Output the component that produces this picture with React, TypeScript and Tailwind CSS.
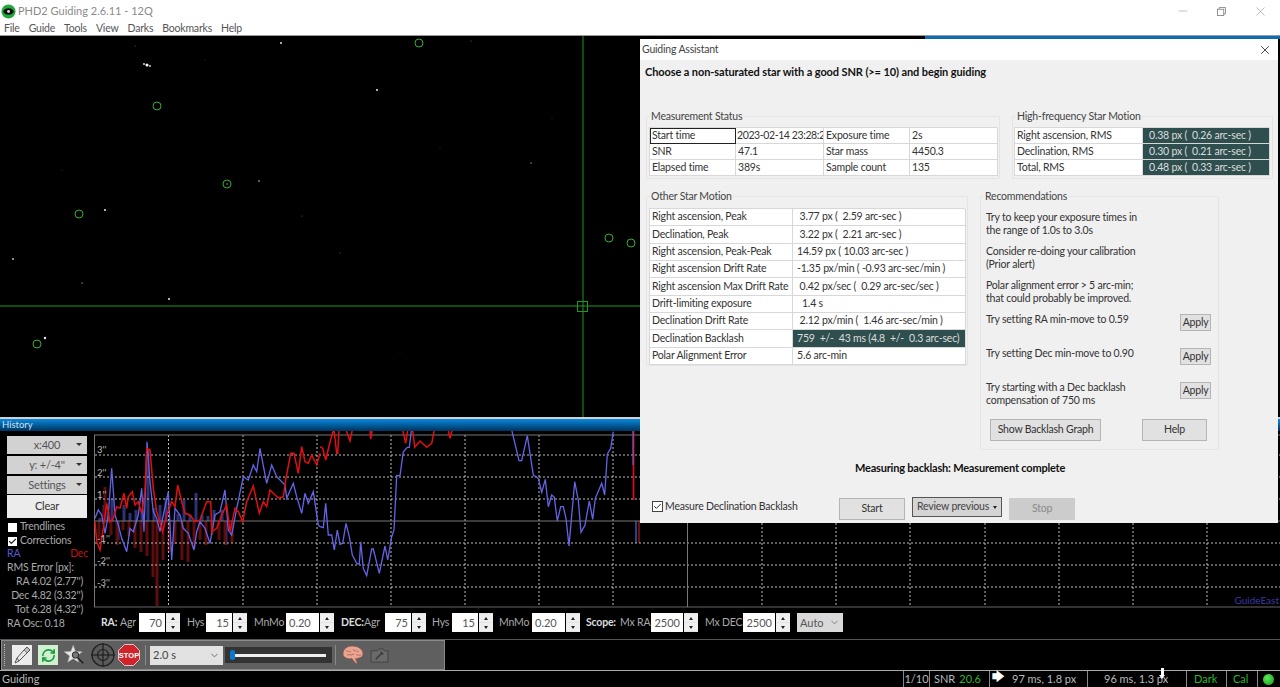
import React from "react";
import { RefreshCw, ChevronDown, X, Minus, Check } from "lucide-react";

type P = [number, number];
const z2 = (p: P[]) => p.map(([x, y]) => `${(x / 3).toFixed(1)},${(415 + y / 3).toFixed(1)}`).join(" ");
const z3 = (p: P[]) => p.map(([x, y]) => `${(320 + x / 3).toFixed(1)},${(415 + y / 3).toFixed(1)}`).join(" ");

const blueA: P[] = [[285,310],[295,285],[305,300],[315,355],[325,300],[335,160],[345,300],[355,330],[365,370],[380,410],[390,340],[400,350],[415,300],[425,220],[432,350],[441,80],[450,200],[460,290],[470,310],[480,350],[490,300],[505,230],[515,435],[525,280],[540,300],[550,340],[565,355],[582,405],[590,350],[600,320],[615,340],[630,385],[645,300],[660,290],[675,225],[685,345],[695,360],[710,280],[730,185],[745,195],[760,150],[770,170],[780,100],[800,205],[815,150],[830,185],[855,210],[860,250],[880,205],[890,245],[905,295],[915,235],[925,265],[940,230],[955,330],[960,335]];
const blueB: P[] = [[0,335],[10,338],[17,265],[25,360],[35,360],[43,405],[52,345],[60,388],[68,385],[78,325],[88,365],[97,420],[110,445],[118,448],[122,380],[130,460],[140,482],[155,402],[160,402],[178,475],[195,393],[203,435],[215,365],[222,345],[230,182],[240,182],[250,110],[262,97],[268,97],[275,40]];
const blueC: P[] = [[575,45],[597,137],[605,137],[622,62],[640,180],[655,190],[665,232],[676,193],[685,275],[695,240],[703,247],[712,318],[722,275],[730,275],[738,310],[747,393],[764,200],[775,255],[783,352],[795,330],[808,258],[818,313],[826,250],[845,205],[854,240],[862,118],[872,100],[880,50]];
const redA: P[] = [[285,320],[290,380],[300,405],[310,340],[320,265],[330,320],[340,310],[350,275],[360,280],[372,235],[380,280],[385,245],[397,230],[405,270],[415,260],[425,295],[435,230],[440,100],[450,105],[460,220],[470,290],[488,350],[500,300],[515,260],[525,275],[533,210],[545,260],[555,295],[570,300],[585,320],[600,315],[620,260],[632,260],[636,350],[650,340],[665,300],[680,270],[690,350],[705,280],[715,290],[728,320],[740,260],[760,213],[778,295],[790,260],[800,275],[810,225],[825,240],[838,250],[850,245],[858,190],[872,115],[882,115],[895,175],[905,95],[915,140],[925,145],[935,120],[950,150],[960,115]];
const redB: P[][] = [
  [[0,95],[8,100],[17,135],[28,90],[38,52],[42,45],[50,115],[53,115],[57,45]],
  [[78,45],[90,78],[97,45]],
  [[150,45],[152,72],[157,45]],
  [[248,45],[257,85],[263,45]],
  [[278,45],[284,97],[300,78],[320,97],[335,85],[343,45]],
  [[385,45],[390,70],[397,45]],
];
const blueBars: P[] = [[100,518],[104,505],[108,512],[112,499],[118,540],[124,505],[130,513],[136,510],[142,510],[148,450],[154,508],[160,505],[166,498],[172,520],[178,514],[184,500],[190,515],[196,493],[202,515],[208,516],[214,510],[222,510],[226,545]];
const redBars: P[] = [[98,540],[103,510],[110,535],[116,545],[122,530],[128,536],[134,548],[140,552],[146,556],[152,577],[156,606],[162,560],[168,552],[174,544],[181,560],[187,562],[193,548],[199,540],[205,545],[211,535],[218,540],[224,545],[231,543],[104,487]];

const ChartSvg = () => (
  <svg viewBox="94 431 1186 177" className="w-full h-[177px] block">
    {blueBars.map(([x, y], i) => <line key={i} x1={x} x2={x} y1={521} y2={y} stroke="#2c3275" strokeWidth="3" />)}
    {redBars.map(([x, y], i) => <line key={i} x1={x + 1} x2={x + 1} y1={521} y2={y} stroke="#5c0d0d" strokeWidth="3" />)}
    <line x1="636" x2="636" y1="521" y2="543" stroke="#333a85" strokeWidth="2" />
    <line x1="639" x2="639" y1="521" y2="543" stroke="#6b0f0f" strokeWidth="2" />
    {[455, 477, 499, 543, 565, 587].map((y) => <line key={y} x1="95" x2="1280" y1={y} y2={y} stroke="#bdbdbd" strokeDasharray="2 2" />)}
    {[168.5, 243, 317, 391, 465, 539, 613, 762, 836, 910, 985, 1059, 1133, 1207].map((x) => <line key={x} x1={x} x2={x} y1="435" y2="607" stroke="#bdbdbd" strokeDasharray="2 2" />)}
    <line x1="94" x2="1280" y1="435" y2="435" stroke="#777" />
    <line x1="94" x2="1280" y1="521" y2="521" stroke="#777" />
    <line x1="94" x2="1280" y1="607" y2="607" stroke="#666" />
    <line x1="94.5" x2="94.5" y1="435" y2="607" stroke="#777" />
    <line x1="687.5" x2="687.5" y1="435" y2="607" stroke="#777" />
    <polyline points={z2(blueA)} fill="none" stroke="#6464e6" strokeWidth="1.3" />
    <polyline points={z3(blueB)} fill="none" stroke="#6464e6" strokeWidth="1.3" />
    <polyline points={z3(blueC)} fill="none" stroke="#6464e6" strokeWidth="1.3" />
    <polyline points={z2(redA)} fill="none" stroke="#e01010" strokeWidth="1.5" />
    {redB.map((p, i) => <polyline key={i} points={z3(p)} fill="none" stroke="#e01010" strokeWidth="1.5" />)}
    <line x1="633.5" x2="633.5" y1="431" y2="500" stroke="#d01020" strokeWidth="1.8" />
    <line x1="633" x2="633" y1="431" y2="465" stroke="#6464e6" strokeWidth="1" />
  </svg>
);

const stars: [number, number, number, string][] = [[147,65,1.6,"#fff"],[144,64,1,"#ddd"],[150,66,1,"#ccc"],[281,43,1,"#ddd"],[377,90,1,"#eee"],[259,181,.8,"#ccc"],[105,210,1.1,"#ddd"],[531,163,.7,"#aaa"],[13,259,.9,"#ccc"],[169,299,1,"#eee"],[45,338,1.2,"#eee"],[82,283,.7,"#999"],[227,184,.7,"#bbb"],[471,41,.5,"#888"],[340,253,.5,"#777"],[135,46,.5,"#777"],[205,60,.4,"#666"],[302,216,.5,"#777"],[440,148,.4,"#666"],[552,118,.4,"#666"],[62,170,.4,"#666"],[400,352,.4,"#666"]];
const rings: P[] = [[419,43],[157,106],[227,184],[79,214],[609,238],[631,243],[37,344]];

const SkyField = () => (
  <svg viewBox="0 36 640 381" className="absolute left-0 top-0 w-[640px] h-[381px]">
    {stars.map(([x, y, r, c], i) => <circle key={i} cx={x} cy={y} r={r} fill={c} />)}
    {rings.map(([x, y], i) => <circle key={i} cx={x} cy={y} r="4" fill="none" stroke="#2fae2f" strokeWidth="1" />)}
    <line x1="0" x2="640" y1="306" y2="306" stroke="#1f9a1f" />
    <line x1="583" x2="583" y1="36" y2="417" stroke="#1f9a1f" />
    <rect x="577.5" y="301.5" width="10" height="10" fill="none" stroke="#1f9a1f" />
  </svg>
);

const SideBtn = ({ label, h = "h-[18px]" }: { label: string; h?: string }) => (
  <div className={`relative ${h} w-[80px] bg-[#d2d2d2] flex items-center justify-center text-[#555] text-[11px]`}>
    {label}
    <span className="absolute right-[5px] top-[7px] w-0 h-0 border-x-[3px] border-x-transparent border-t-[3px] border-t-[#333]" />
  </div>
);

const Spin = ({ w, value, align = "right" }: { w: string; value: string; align?: string }) => (
  <div className="flex items-center">
    <div className={`${w} h-[19px] bg-white text-[#555] text-[11px] leading-[19px] px-[3px] ${align === "right" ? "text-right" : "text-left"}`}>{value}</div>
    <div className="ml-[1px] w-[14px] h-[19px] bg-[#e4e4e4] flex flex-col justify-between py-[1px]">
      <div className="h-[8px] bg-[#efefef] flex items-center justify-center"><span className="w-0 h-0 border-x-[2.5px] border-x-transparent border-b-[3px] border-b-[#222]" /></div>
      <div className="h-[8px] bg-[#efefef] flex items-center justify-center"><span className="w-0 h-0 border-x-[2.5px] border-x-transparent border-t-[3px] border-t-[#222]" /></div>
    </div>
  </div>
);

const Lbl = ({ children, w, bold }: { children: React.ReactNode; w?: string; bold?: boolean }) => (
  <span className={`${w ?? ""} text-[10.5px] tracking-[-0.2px] whitespace-nowrap ${bold ? "font-bold text-[#ddd]" : "text-[#aaa]"}`}>{children}</span>
);

const Controls = () => (
  <div className="h-[30px] flex items-center pl-[7px] pb-[1px]">
    <Lbl bold w="w-[18px]">RA:</Lbl>
    <Lbl w="w-[19px] ml-[1px]">Agr</Lbl>
    <Spin w="w-[26px]" value="70" />
    <Lbl w="w-[19px] ml-[7px]">Hys</Lbl>
    <Spin w="w-[26px]" value="15" />
    <Lbl w="w-[32px] ml-[7px]">MnMo</Lbl>
    <Spin w="w-[33px]" value="0.20" align="left" />
    <Lbl bold w="w-[23px] ml-[7px]">DEC:</Lbl>
    <Lbl w="w-[21px]">Agr</Lbl>
    <Spin w="w-[26px]" value="75" />
    <Lbl w="w-[20px] ml-[6px]">Hys</Lbl>
    <Spin w="w-[26px]" value="15" />
    <Lbl w="w-[33px] ml-[6px]">MnMo</Lbl>
    <Spin w="w-[33px]" value="0.20" align="left" />
    <Lbl bold w="w-[34px] ml-[6px]">Scope:</Lbl>
    <Lbl w="w-[31px]">Mx RA</Lbl>
    <Spin w="w-[32px]" value="2500" />
    <Lbl w="w-[38px] ml-[7px]">Mx DEC</Lbl>
    <Spin w="w-[32px]" value="2500" />
    <div className="ml-[7px] w-[46px] h-[19px] bg-[#d9d9d9] text-[#555] text-[11px] leading-[19px] pl-[3px] flex items-center justify-between">
      Auto <ChevronDown className="w-[11px] h-[11px] mr-[3px] text-[#777]" />
    </div>
  </div>
);

const CheckRow = ({ label, on }: { label: string; on?: boolean }) => (
  <div className="h-[14px] flex items-center gap-[3px] text-[#aaa] text-[10.5px] tracking-[-0.2px]">
    <span className="w-[9px] h-[9px] bg-white ml-[1px] flex items-center justify-center">
      {on && <Check className="w-[9px] h-[9px] text-[#222]" strokeWidth={3} />}
    </span>
    {label}
  </div>
);

const LeftPanel = () => (
  <div className="w-[94px] shrink-0 pl-[7px] pt-[5px] text-[10.5px] tracking-[-0.2px] text-[#aaa]">
    <div className="flex flex-col gap-[2px]">
      <SideBtn label="x:400" />
      <SideBtn label="y: +/-4''" />
      <SideBtn label="Settings" />
    </div>
    <div className="mt-[1px] w-[80px] h-[23px] bg-[#ececec] text-[#333] flex items-center justify-center text-[11px]">Clear</div>
    <div className="mt-[2px]"><CheckRow label="Trendlines" /></div>
    <CheckRow label="Corrections" on />
    <div className="flex justify-between w-[81px] h-[14px] leading-[14px] mt-[-2px]"><span className="text-[#5a5ad0]">RA</span><span className="text-[#c01515]">Dec</span></div>
    <div className="h-[14px] leading-[14px]">RMS Error [px]:</div>
    <div className="w-[76px] text-right h-[14px] leading-[14px] whitespace-nowrap">RA 4.02 (2.77'')</div>
    <div className="w-[76px] text-right h-[14px] leading-[14px] whitespace-nowrap">Dec 4.82 (3.32'')</div>
    <div className="w-[76px] text-right h-[14px] leading-[14px] whitespace-nowrap">Tot 6.28 (4.32'')</div>
    <div className="h-[14px] leading-[14px]">RA Osc: 0.18</div>
  </div>
);

const UsbIcon = () => (
  <svg viewBox="0 0 20 20" className="w-[20px] h-[20px]" fill="none" stroke="#555" strokeWidth="1">
    <path d="M3 18 L5 13 L12 5 L15 8 L7 16 Z" fill="#e8e8e8" />
    <path d="M12 5 L15 2 L18 5 L15 8" fill="#bbb" />
    <path d="M5 13 L7 16" />
  </svg>
);
const StarIcon = () => (
  <svg viewBox="0 0 24 24" className="w-[22px] h-[22px]">
    <path d="M10 1 L12.5 8 L20 8.5 L14 13 L16 20 L10 16 L4 20 L6 13 L0 8.5 L7.5 8 Z" fill="#e6e6e6" stroke="#999" strokeWidth=".5" />
    <circle cx="12.5" cy="12" r="3.5" fill="#777" stroke="#222" strokeWidth="1" />
    <line x1="15" y1="15" x2="21" y2="21" stroke="#222" strokeWidth="1.8" />
  </svg>
);
const ScopeIcon = () => (
  <svg viewBox="0 0 24 24" className="w-[24px] h-[24px]" fill="none" stroke="#1e1e1e">
    <circle cx="12" cy="12" r="11" strokeWidth="1.2" fill="#5a5a5a" />
    <circle cx="12" cy="12" r="5.5" strokeWidth="1.2" />
    <line x1="0" x2="24" y1="12" y2="12" strokeWidth="1.2" />
    <line x1="12" x2="12" y1="0" y2="24" strokeWidth="1.2" />
  </svg>
);
const StopIcon = () => (
  <svg viewBox="0 0 22 22" className="w-[22px] h-[22px]">
    <path d="M6.5 .5 H15.5 L21.5 6.5 V15.5 L15.5 21.5 H6.5 L.5 15.5 V6.5 Z" fill="#d2232a" stroke="#eee" strokeWidth=".8" />
    <text x="11" y="14" textAnchor="middle" fontSize="7.5" fontWeight="700" fill="#fff" fontFamily="Liberation Sans, sans-serif">STOP</text>
  </svg>
);
const BrainIcon = () => (
  <svg viewBox="0 0 22 20" className="w-[22px] h-[20px]">
    <path d="M1 9 C1 4 5 1 10 1 C16 1 21 4 21 9 C21 12 18 13 16 13 C15.500 14 14 14 13.500 13.500 C14 16 16 18 15 18.500 C13 18.500 11 15 10 13.500 C7 14.500 1 13 1 9 Z" fill="#e9a592" stroke="#8a5246" strokeWidth=".7" />
    <path d="M4 6 C6 5 7 8 9 6 M11 4 C12 7 15 5 17 7 M5 10 C7 9 9 11 12 9 M14 9 C15 11 17 10 19 10" stroke="#a45f50" strokeWidth=".8" fill="none" />
  </svg>
);
const ToolIcon = () => (
  <svg viewBox="0 0 20 16" className="w-[19px] h-[15px]" fill="none" stroke="#424242" strokeWidth="1">
    <path d="M1 3 H8 L9 1 H14 L15 3 H19 V15 H1 Z" fill="#6a6a6a" />
    <path d="M6 12 L12 6 M11 4 L14 7" stroke="#3c3c3c" strokeWidth="1.6" />
  </svg>
);

const Toolbar = () => (
  <div className="mx-[1px] w-[444px] h-[30px] bg-[#5f5f5f] border border-[#8a8a8a] flex items-center pl-[2px]">
    <div className="w-[1px] h-[22px] border-l border-dotted border-[#bbb]" />
    <div className="ml-[7px] w-[20px] h-[20px] bg-[#ececec] flex items-center justify-center"><UsbIcon /></div>
    <div className="ml-[6px] w-[20px] h-[20px] bg-[#d0f0d0] flex items-center justify-center"><RefreshCw className="w-[15px] h-[15px] text-[#1a9c3c]" strokeWidth={2.6} /></div>
    <div className="ml-[6px] w-[22px] flex justify-center"><StarIcon /></div>
    <div className="ml-[5px] w-[24px] flex justify-center"><ScopeIcon /></div>
    <div className="ml-[3px] w-[22px] flex justify-center"><StopIcon /></div>
    <div className="ml-[5px] w-[1px] h-[20px] bg-[#8a8a8a]" />
    <div className="ml-[4px] w-[73px] h-[19px] bg-[#e2e2e2] text-[#444] text-[11px] pl-[3px] flex items-center justify-between">
      2.0 s <ChevronDown className="w-[11px] h-[11px] mr-[3px] text-[#666]" />
    </div>
    <div className="ml-[2px] w-[107px] h-[16px] bg-[#333] relative flex items-center pl-[6px]">
      <div className="w-[95px] h-[3px] bg-[#eee]" />
      <div className="absolute left-[5px] top-[3px] w-[5px] h-[10px] rounded-[2px] bg-[#0a78d0]" />
    </div>
    <div className="ml-[3px] w-[1px] h-[20px] bg-[#8a8a8a]" />
    <div className="ml-[6px]"><BrainIcon /></div>
    <div className="ml-[6px]"><ToolIcon /></div>
  </div>
);

const StatusCell = ({ w, children, cls = "" }: { w: string; children: React.ReactNode; cls?: string }) => (
  <div className={`${w} h-full border-l border-[#888] flex items-center ${cls}`}>{children}</div>
);

const StatusBar = () => (
  <div className="h-[17px] border-t border-[#aaa] flex items-center text-[11px] text-[#bbb]">
    <div className="w-[903px] pl-[2px]">Guiding</div>
    <StatusCell w="w-[26px]" cls="justify-center">1/10</StatusCell>
    <StatusCell w="w-[60px]" cls="pl-[4px] justify-between pr-[8px]"><span>SNR</span><span className="text-[#2fb52f]">20.6</span></StatusCell>
    <StatusCell w="w-[98px]" cls="relative pl-[22px]">
      <span className="absolute left-[2px] top-[-1px] text-white text-[12px] font-bold leading-[14px]">🡆</span>97 ms, 1.8 px
    </StatusCell>
    <StatusCell w="w-[99px]" cls="relative pl-[16px]">
      96 ms, 1.3 px
      <span className="absolute left-[73px] top-[-3px] w-[3px] h-[7px] bg-white" />
      <span className="absolute left-[71px] top-[4px] w-0 h-0 border-x-[3.5px] border-x-transparent border-t-[4px] border-t-white" />
    </StatusCell>
    <StatusCell w="w-[40px]" cls="pl-[7px] text-[#2fb52f]">Dark</StatusCell>
    <StatusCell w="w-[31px]" cls="pl-[6px] text-[#2fb52f]">Cal</StatusCell>
    <StatusCell w="w-[23px]" cls="pl-[5px]"><span className="w-[11px] h-[11px] rounded-full bg-[radial-gradient(circle_at_40%_35%,#5fe85f,#119a11)]" /></StatusCell>
  </div>
);

const Group = ({ title, className, children }: { title: string; className: string; children: React.ReactNode }) => (
  <fieldset className={`border border-[#e4e4e4] rounded-[1px] px-[2px] ${className}`}>
    <legend className="ml-[1px] px-[1px] leading-[13px] text-[#444]">{title}</legend>
    {children}
  </fieldset>
);

const c = "px-[2px] border-r border-b border-[#d8d8d8] whitespace-nowrap overflow-hidden flex items-center";

const DialogBtn = ({ children, cls }: { children: React.ReactNode; cls: string }) => (
  <div className={`flex items-center justify-center border border-[#b5b5b5] bg-[#e1e1e1] text-[#333] whitespace-nowrap ${cls}`}>{children}</div>
);

const status = [
  ["Start time", "2023-02-14 23:28:2", "Exposure time", "2s"],
  ["SNR", "47.1", "Star mass", "4450.3"],
  ["Elapsed time", "389s", "Sample count", "135"],
];
const hf = [
  ["Right ascension, RMS", "0.38 px (  0.26 arc-sec )"],
  ["Declination, RMS", "0.30 px (  0.21 arc-sec )"],
  ["Total, RMS", "0.48 px (  0.33 arc-sec )"],
];
const other = [
  ["Right ascension, Peak", " 3.77 px (  2.59 arc-sec )", 0],
  ["Declination, Peak", " 3.22 px (  2.21 arc-sec )", 0],
  ["Right ascension, Peak-Peak", "14.59 px ( 10.03 arc-sec )", 0],
  ["Right ascension Drift Rate", "-1.35 px/min ( -0.93 arc-sec/min )", 0],
  ["Right ascension Max Drift Rate", " 0.42 px/sec (  0.29 arc-sec/sec )", 0],
  ["Drift-limiting exposure", "  1.4 s", 0],
  ["Declination Drift Rate", " 2.12 px/min (  1.46 arc-sec/min )", 0],
  ["Declination Backlash", "759  +/-  43 ms (4.8  +/-  0.3 arc-sec)", 1],
  ["Polar Alignment Error", "5.6 arc-min", 0],
] as const;

const Dialog = () => (
  <div className="absolute left-[640px] top-[39px] w-[638px] h-[484px] bg-[#f0f0f0] flex flex-col text-[10.5px] tracking-[-0.2px] text-[#333]">
    <div className="h-[21px] shrink-0 bg-white flex items-center justify-between pl-[2px] pr-[6px] text-[#444]">
      Guiding Assistant
      <X className="w-[14px] h-[14px] text-[#222]" strokeWidth={1.4} />
    </div>
    <div className="h-[24px] shrink-0 pl-[5px] flex items-center font-bold text-[#111] text-[11px] tracking-[-0.1px]">Choose a non-saturated star with a good SNR (&gt;= 10) and begin guiding</div>
    <div className="mt-[26px] flex items-start">
      <Group title="Measurement Status" className="ml-[6px] w-[354px] h-[69px]">
        <div className="mt-[4px] bg-white border-t border-l border-[#d8d8d8] grid grid-cols-[86px_88px_86px_88px] w-[348px]">
          {status.flat().map((t, i) => (
            <div key={i} className={`${c} h-[16px] ${i === 0 ? "outline outline-[1.5px] outline-[#222] -outline-offset-1" : ""} ${i === 1 ? "tracking-[-0.4px] !px-[1px]" : ""}`}>{t}</div>
          ))}
        </div>
      </Group>
      <Group title="High-frequency Star Motion" className="ml-[12px] w-[261px] h-[69px]">
        <div className="mt-[4px] -ml-[1px] bg-white border-t border-l border-[#d8d8d8] grid grid-cols-[128px_127px] w-[255px]">
          {hf.map(([a, b]) => (
            <React.Fragment key={a}>
              <div className={`${c} h-[16px]`}>{a}</div>
              <div className={`${c} h-[16px] bg-[#2f4f4f] text-[#ddd] whitespace-pre !pl-[6px]`}>{b}</div>
            </React.Fragment>
          ))}
        </div>
      </Group>
    </div>
    <div className="mt-[11px] flex items-start">
      <Group title="Other Star Motion" className="ml-[6px] w-[321px] h-[176px]">
        <div className="mt-[5px] bg-white border-t border-l border-[#d8d8d8] grid grid-cols-[143px_173px] grid-rows-[repeat(9,17.33px)] w-[316px]">
          {other.map(([a, b, dark]) => (
            <React.Fragment key={a}>
              <div className={c}>{a}</div>
              <div className={`${c} whitespace-pre !pl-[4px] ${dark ? "bg-[#2f4f4f] text-[#ddd]" : ""}`}>{b}</div>
            </React.Fragment>
          ))}
        </div>
      </Group>
      <Group title="Recommendations" className="ml-[12px] w-[239px] h-[260px]">
        <div className="flex flex-col leading-[13.4px] px-[3px] pt-[1px]">
          <div className="h-[34px] pt-[7px]">Try to keep your exposure times in<br />the range of 1.0s to 3.0s</div>
          <div className="h-[34px] pt-[7px]">Consider re-doing your calibration<br />(Prior alert)</div>
          <div className="h-[34px] pt-[7px]">Polar alignment error &gt; 5 arc-min;<br />that could probably be improved.</div>
          <div className="h-[34px] pt-[7px] flex justify-between"><span>Try setting RA min-move to 0.59</span><DialogBtn cls="w-[31px] h-[17px] mt-[1px] mr-[2px]">Apply</DialogBtn></div>
          <div className="h-[34px] pt-[7px] flex justify-between"><span>Try setting Dec min-move to 0.90</span><DialogBtn cls="w-[31px] h-[17px] mt-[1px] mr-[2px]">Apply</DialogBtn></div>
          <div className="h-[34px] pt-[7px] flex justify-between"><span>Try starting with a Dec backlash<br />compensation of 750 ms</span><DialogBtn cls="w-[31px] h-[17px] mt-[1px] mr-[2px]">Apply</DialogBtn></div>
        </div>
        <div className="mt-[11px] ml-[7px] flex justify-between pr-[9px]">
          <DialogBtn cls="w-[111px] h-[22px]">Show Backlash Graph</DialogBtn>
          <DialogBtn cls="w-[65px] h-[22px]">Help</DialogBtn>
        </div>
      </Group>
    </div>
    <div className="mt-[10px] h-[16px] pl-[215px] flex items-center font-bold text-[#111] text-[11px] tracking-[-0.2px]">Measuring backlash: Measurement complete</div>
    <div className="mt-[21px] flex items-start">
      <div className="ml-[12px] w-[187px] h-[19px] flex items-center gap-[2px]">
        <span className="w-[11px] h-[11px] bg-white border border-[#444] flex items-center justify-center"><Check className="w-[9px] h-[9px] text-[#222]" strokeWidth={2.5} /></span>
        Measure Declination Backlash
      </div>
      <DialogBtn cls="w-[66px] h-[22px] mt-[1px]">Start</DialogBtn>
      <div className="ml-[7px] w-[90px] h-[20px] bg-[#d4d4d4] border border-[#555] text-[#444] flex items-center justify-center gap-[4px] whitespace-nowrap">
        Review previous<span className="w-0 h-0 border-x-[2.5px] border-x-transparent border-t-[3px] border-t-[#222]" />
      </div>
      <div className="ml-[7px] mt-[1px] w-[66px] h-[22px] bg-[#cccccc] text-[#8a8a8a] flex items-center justify-center">Stop</div>
    </div>
  </div>
);

export default function App() {
  return (
    <div className="relative w-[1280px] h-[687px] overflow-hidden bg-black flex flex-col font-['Lato',sans-serif]">
      <div className="h-[22px] bg-white flex items-center pl-[1px] gap-[2px] text-[11px] text-[#8a8a8a]">
        <svg viewBox="0 0 16 16" className="w-[15px] h-[15px]">
          <circle cx="8" cy="8" r="7.5" fill="#23a63a" />
          <ellipse cx="8" cy="8" rx="5.500" ry="3.500" fill="#111" />
          <circle cx="8" cy="8" r="1.500" fill="#ddd" />
        </svg>
        PHD2 Guiding 2.6.11 - 12Q
        <div className="ml-auto flex items-center text-[#999]">
          <Minus className="w-[14px] h-[14px] mr-[27px]" strokeWidth={1} />
          <svg viewBox="0 0 10 10" className="w-[9px] h-[9px] mr-[27px]" fill="none" stroke="#888"><rect x=".5" y="2.500" width="7" height="7" /><path d="M2.500 2.500 V.5 H9.500 V7.500 H7.500" /></svg>
          <X className="w-[15px] h-[15px] mr-[12px]" strokeWidth={1} />
        </div>
      </div>
      <div className="h-[14px] bg-white border-b border-[#999] flex items-center pl-[4px] gap-[9px] text-[10.5px] tracking-[-0.2px] text-[#555]">
        {["File", "Guide", "Tools", "View", "Darks", "Bookmarks", "Help"].map((m) => <span key={m}>{m}</span>)}
      </div>
      <div className="relative h-[381px] shrink-0">
        <SkyField />
        <div className="absolute left-[925px] top-0 right-0 h-[3px] bg-[#0f6cb0]" />
      </div>
      <div className="h-[2px] bg-[#d0d0d0]" />
      <div className="h-[12px] bg-gradient-to-b from-[#0a8ae0] to-[#00355f] text-[#cfe0ee] text-[9.5px] leading-[12px] pl-[2px]">History</div>
      <div className="flex h-[207px] shrink-0">
        <LeftPanel />
        <div className="relative flex-1 min-w-0">
          <ChartSvg />
          <Controls />
          <span className="absolute right-[1px] top-[163px] text-[10px] leading-[12px] text-[#3a3aa8]">GuideEast</span>
          <span className="absolute left-[3px] top-[13px] text-[9.5px] text-[#bbb] leading-[11px]">3''</span>
          <span className="absolute left-[3px] top-[36px] text-[9.5px] text-[#bbb] leading-[11px]">2''</span>
          <span className="absolute left-[3px] top-[58px] text-[9.5px] text-[#bbb] leading-[11px]">1''</span>
          <span className="absolute left-[3px] top-[102px] text-[9.5px] text-[#bbb] leading-[11px]">-1''</span>
          <span className="absolute left-[3px] top-[124px] text-[9.5px] text-[#bbb] leading-[11px]">-2''</span>
          <span className="absolute left-[3px] top-[146px] text-[9.5px] text-[#bbb] leading-[11px]">-3''</span>
        </div>
      </div>
      <div className="h-[1px] bg-[#555] mt-[1px]" />
      <Toolbar />
      <StatusBar />
      <Dialog />
    </div>
  );
}
